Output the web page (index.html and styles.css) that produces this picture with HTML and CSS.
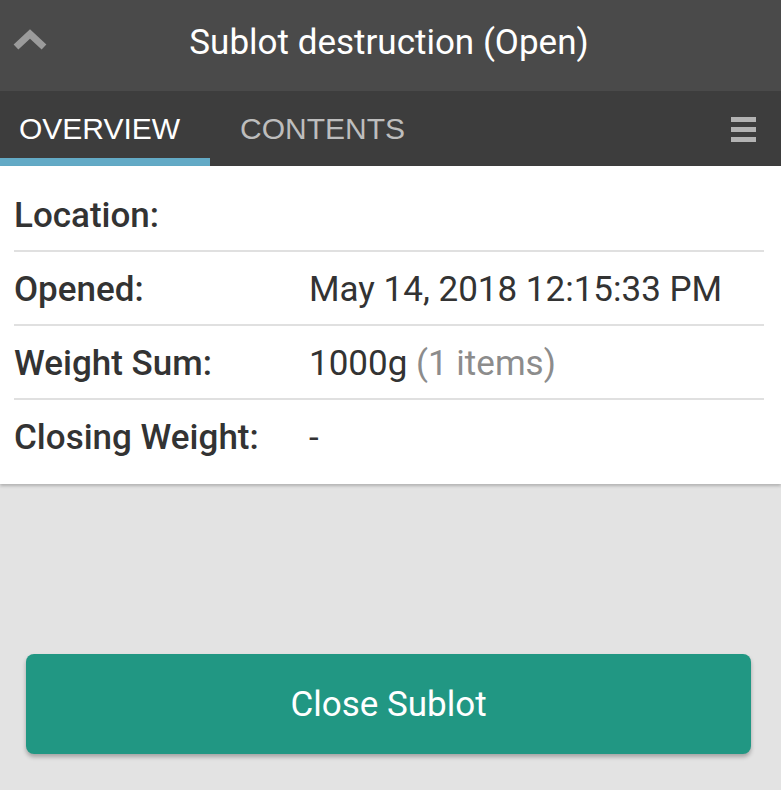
FILE: index.html
```html
<!DOCTYPE html>
<html>
<head>
<meta charset="utf-8">
<link rel="stylesheet" href="styles.css">
</head>
<body>
<div class="app">
  <header class="topbar">
    <svg class="chevron" width="34" height="24" viewBox="0 0 34 24"><path d="M3 19 L17 6 L31 19" fill="none" stroke="#9b9b9b" stroke-width="7" stroke-linejoin="miter"/></svg>
    <h1 class="title">Sublot destruction (Open)</h1>
  </header>
  <nav class="tabs">
    <div class="tab active">OVERVIEW</div>
    <div class="tab">CONTENTS</div>
    <div class="menu"><span></span><span></span><span></span></div>
  </nav>
  <section class="panel">
    <div class="row"><div class="label">Location:</div><div class="value"></div></div>
    <div class="row"><div class="label">Opened:</div><div class="value">May 14, 2018 12:15:33 PM</div></div>
    <div class="row"><div class="label">Weight Sum:</div><div class="value">1000g <span class="muted">(1 items)</span></div></div>
    <div class="row"><div class="label">Closing Weight:</div><div class="value">-</div></div>
  </section>
  <div class="spacer"></div>
  <div class="actions">
    <button class="btn">Close Sublot</button>
  </div>
</div>
</body>
</html>
```
FILE: styles.css
```css
* { box-sizing: border-box; }
html, body { margin: 0; padding: 0; }
body {
  background: #e3e3e3;
  font-family: Roboto, "Liberation Sans", sans-serif;
  width: 781px;
  height: 790px;
  overflow: hidden;
}
.app { display: flex; flex-direction: column; height: 790px; }
.topbar {
  height: 91px;
  background: #4a4a4a;
  display: flex;
  align-items: center;
  justify-content: center;
  position: relative;
  padding-bottom: 7px;
}
.chevron { position: absolute; left: 13px; top: 28px; }
.title {
  margin: 0;
  color: #ffffff;
  font-family: Roboto, sans-serif;
  font-weight: 400;
  font-size: 35px;
  padding-right: 3px;
}
.tabs {
  height: 75px;
  background: #3d3d3d;
  display: flex;
  align-items: stretch;
}
.tab {
  font-family: "Liberation Sans", Arial, sans-serif;
  font-size: 30px;
  color: #bdbdbd;
  display: flex;
  align-items: center;
  padding: 8px 20px 0 30px;
  border-bottom: 8px solid transparent;
}
.tab.active {
  color: #ffffff;
  width: 210px;
  padding-left: 19px;
  border-bottom-color: #63aac6;
}
.menu {
  margin-left: auto;
  margin-right: 25px;
  display: flex;
  flex-direction: column;
  gap: 5px;
  justify-content: center;
  padding-top: 2px;
}
.menu span {
  display: block;
  width: 25px;
  height: 5px;
  background: #b3b3b3;
}
.panel {
  background: #ffffff;
  padding: 12px 17px 11px 14px;
  box-shadow: 0 2px 3px rgba(0,0,0,0.22);
  position: relative;
  z-index: 1;
}
.row {
  display: flex;
  align-items: center;
  height: 74px;
  border-bottom: 2px solid #e0e0e0;
  font-size: 35px;
  color: #333333;
  padding-top: 2px;
}
.row:last-child { border-bottom: none; height: 73px; }
.label { width: 295px; font-weight: 500; }
.value { font-weight: 400; }
.muted { color: #8c8c8c; }
.spacer { flex: 1; }
.actions { padding: 0 30px 36px 26px; }
.btn {
  width: 100%;
  height: 100px;
  border: none;
  border-radius: 8px;
  background: #219783;
  color: #ffffff;
  font-family: Roboto, sans-serif;
  font-size: 35px;
  box-shadow: 0 3px 4px rgba(0,0,0,0.28);
}
```
